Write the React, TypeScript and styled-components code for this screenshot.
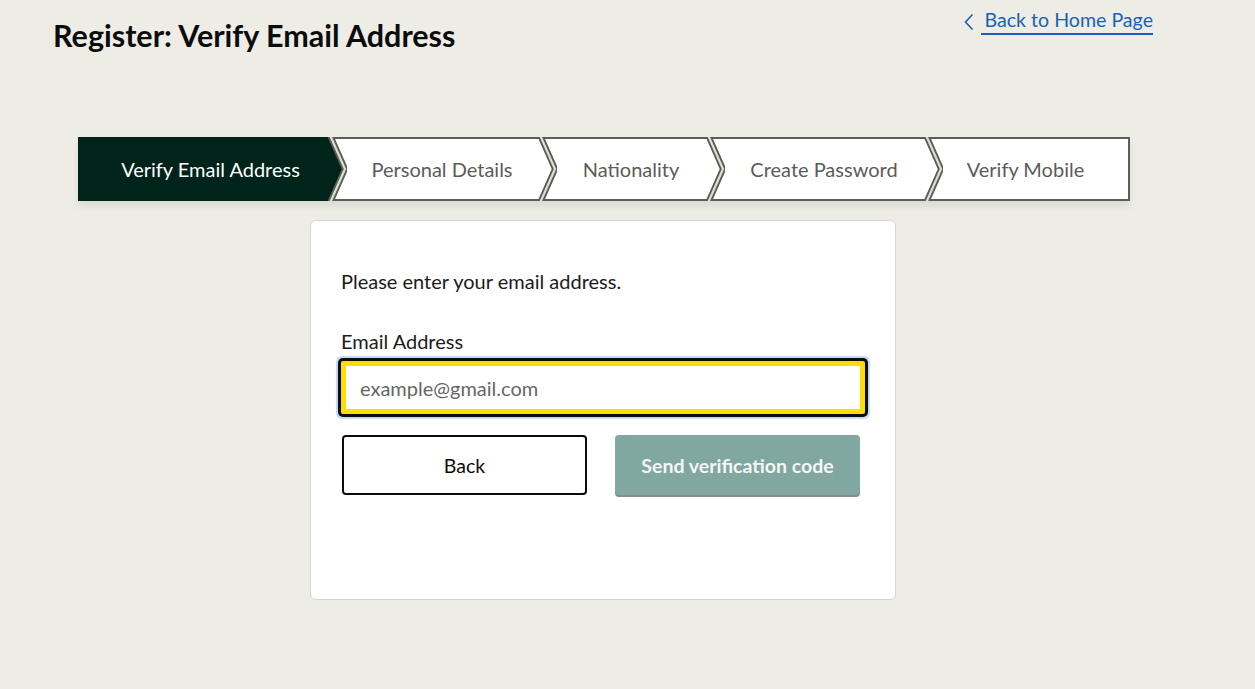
import React from "react";
import styled, { createGlobalStyle } from "styled-components";

const GlobalStyle = createGlobalStyle`
  html, body {
    margin: 0;
    padding: 0;
    background: #edece5;
    font-family: Lato, "Open Sans", Arial, sans-serif;
  }
  * { box-sizing: border-box; }
`;

const Page = styled.div`
  width: 1255px;
  height: 689px;
  background: #edece5;
  display: flex;
  flex-direction: column;
`;

const Header = styled.header`
  display: flex;
  justify-content: space-between;
  align-items: flex-start;
  padding: 0 102px 0 53px;
`;

const Title = styled.h1`
  margin: 16px 0 0;
  font-size: 30.5px;
  font-weight: 700;
  line-height: 38px;
  color: #0b0c0c;
`;

const HomeLink = styled.a`
  margin-top: 8px;
  display: flex;
  align-items: center;
  gap: 7px;
  color: #1763b8;
  font-size: 19.6px;
  line-height: 24px;
  text-decoration: none;
  cursor: pointer;
`;

const LinkText = styled.span`
  padding: 0 0 1px 4px;
  border-bottom: 2px solid #1763b8;
`;

const Stepper = styled.nav`
  margin: 83px 0 0 78px;
  width: 1052px;
  height: 64px;
  display: flex;
  background: #ffffff;
  box-shadow: 0 5px 8px rgba(0, 0, 0, 0.08);
`;

const Step = styled.div<{ $active?: boolean; $w: number; $pl?: number; $pr?: number; $last?: boolean }>`
  width: ${(p) => p.$w}px;
  flex: none;
  display: flex;
  align-items: center;
  justify-content: center;
  padding-left: ${(p) => p.$pl ?? 0}px;
  padding-right: ${(p) => p.$pr ?? 0}px;
  background: ${(p) => (p.$active ? "#00231a" : "#ffffff")};
  color: ${(p) => (p.$active ? "#ffffff" : "#5b5b5b")};
  font-size: 20px;
  border-top: ${(p) => (p.$active ? "none" : "2px solid #5d5e55")};
  border-bottom: ${(p) => (p.$active ? "none" : "2px solid #5d5e55")};
  border-right: ${(p) => (p.$last ? "2px solid #5d5e55" : "none")};
  white-space: nowrap;
`;

const SepSvg = styled.svg`
  flex: none;
  display: block;
`;

const Separator = ({ active }: { active?: boolean }) => (
  <SepSvg width="20" height="64" viewBox="0 0 20 64">
    <rect x="0" y="0" width="20" height="64" fill="#ffffff" />
    <line x1="0" y1="1" x2="20" y2="1" stroke="#5d5e55" strokeWidth="2" />
    <line x1="0" y1="63" x2="20" y2="63" stroke="#5d5e55" strokeWidth="2" />
    {active && <polygon points="0,0 3,0 18,32 3,64 0,64" fill="#00231a" />}
    <polyline points="3,-2 18,32 3,66" fill="none" stroke="#5d5e55" strokeWidth="6" />
    <polyline points="3,-2 18,32 3,66" fill="none" stroke="#deddd6" strokeWidth="2.2" />
  </SepSvg>
);

const Card = styled.section`
  margin: 19px 0 0 310px;
  width: 586px;
  height: 380px;
  background: #ffffff;
  border: 1px solid #d6d6d1;
  border-radius: 6px;
  padding: 47px 30px 0;
  display: flex;
  flex-direction: column;
`;

const Intro = styled.p`
  margin: 0;
  font-size: 20px;
  line-height: 26px;
  color: #1b1b1b;
`;

const Label = styled.label`
  margin-top: 34px;
  font-size: 20px;
  line-height: 26px;
  color: #1b1b1b;
`;

const Input = styled.input`
  margin-top: 7px;
  width: 524px;
  height: 53px;
  border: 5px solid #ffdd00;
  border-radius: 2px;
  box-shadow: 0 0 0 3px #0b0c0c, 0 0 0 5px #c4dbf6;
  padding: 0 14px;
  font-family: inherit;
  font-size: 20px;
  color: #0b0c0c;
  outline: none;
  background: #ffffff;
  &::placeholder {
    color: #666666;
  }
`;

const Buttons = styled.div`
  margin-top: 21px;
  padding-left: 1px;
  display: grid;
  grid-template-columns: 245px 245px;
  column-gap: 28px;
`;

const Button = styled.button<{ $primary?: boolean }>`
  height: 60px;
  border-radius: 4px;
  font-family: inherit;
  font-size: 19.5px;
  cursor: pointer;
  border: ${(p) => (p.$primary ? "none" : "2px solid #0b0c0c")};
  background: ${(p) => (p.$primary ? "#80a8a0" : "#ffffff")};
  color: ${(p) => (p.$primary ? "#f4f6f5" : "#0b0c0c")};
  font-weight: ${(p) => (p.$primary ? 700 : 400)};
  box-shadow: ${(p) => (p.$primary ? "0 2px 0 #8b8b87" : "none")};
`;

export default function App() {
  return (
    <>
      <GlobalStyle />
      <Page>
        <Header>
          <Title>Register: Verify Email Address</Title>
          <HomeLink>
            <svg width="10" height="18" viewBox="0 0 10 18">
              <polyline points="8.5,1.5 1.5,9 8.5,16.5" fill="none" stroke="#1763b8" strokeWidth="1.6" />
            </svg>
            <LinkText>Back to Home Page</LinkText>
          </HomeLink>
        </Header>
        <Stepper>
          <Step $active $w={249} $pl={16}>Verify Email Address</Step>
          <Separator active />
          <Step $w={190}>Personal Details</Step>
          <Separator />
          <Step $w={148}>Nationality</Step>
          <Separator />
          <Step $w={198}>Create Password</Step>
          <Separator />
          <Step $w={187} $pr={20} $last>Verify Mobile</Step>
        </Stepper>
        <Card>
          <Intro>Please enter your email address.</Intro>
          <Label htmlFor="email">Email Address</Label>
          <Input id="email" placeholder="example@gmail.com" />
          <Buttons>
            <Button>Back</Button>
            <Button $primary>Send verification code</Button>
          </Buttons>
        </Card>
      </Page>
    </>
  );
}
